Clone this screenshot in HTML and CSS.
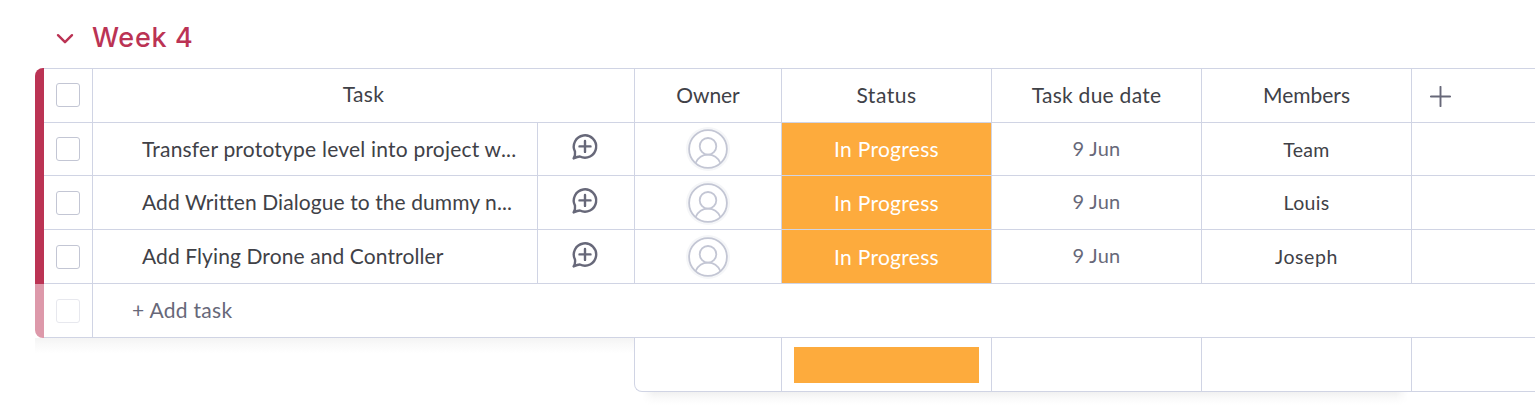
FILE: index.html
```html
<!DOCTYPE html>
<html lang="en">
<head>
<meta charset="utf-8">
<title>Week 4</title>
<link rel="stylesheet" href="styles.css">
</head>
<body>
<svg class="defs" width="0" height="0" aria-hidden="true">
  <symbol id="chat" viewBox="0 0 28 28">
    <path d="M2.6 25.4 C4 23.4 4.4 21.4 4 18.6 A11.2 11.2 0 1 1 8.9 23.5 C6.8 23.7 4.8 24.5 2.6 25.4Z"/>
    <path d="M14 7.9V18.9M8.5 13.4H19.5"/>
  </symbol>
  <symbol id="person" viewBox="0 0 44 44">
    <circle class="halo" cx="22" cy="22" r="22"/>
    <circle class="face" cx="22" cy="22" r="18.9"/>
    <circle cx="22" cy="19.3" r="8.3"/>
    <path d="M9.6 36C12 30.7 16.4 27.6 22 27.6S32 30.7 34.4 36"/>
  </symbol>
</svg>
<main class="group">
  <header class="group-head">
    <svg class="chevron" viewBox="0 0 18 12"><path d="M2 2.2L9 9.2L16 2.2"/></svg>
    <h1 class="title">Week 4</h1>
  </header>
  <section class="board">
    <div class="row head">
      <div class="bar"></div><div class="cell check"><span class="box"></span></div>
      <div class="cell wide"><span class="t-task">Task</span></div>
      <div class="cell"><span class="t-owner">Owner</span></div>
      <div class="cell"><span class="t-status">Status</span></div>
      <div class="cell"><span class="t-due">Task due date</span></div>
      <div class="cell"><span class="t-members">Members</span></div>
      <div class="cell plus"><svg class="plus-icon" viewBox="0 0 22 22"><path d="M11 .9V21.1M.9 11H21.1"/></svg></div>
    </div>
    <div class="row first">
      <div class="bar"></div><div class="cell"><span class="box"></span></div>
      <div class="cell name"><span class="n1">Transfer prototype level into project w...</span></div>
      <div class="cell"><svg class="chat"><use href="#chat"/></svg></div>
      <div class="cell owner"><svg class="person"><use href="#person"/></svg></div>
      <div class="cell status"><span>In Progress</span></div>
      <div class="cell date"><span>9 Jun</span></div>
      <div class="cell member"><span class="m1">Team</span></div>
      <div class="cell last"></div>
    </div>
    <div class="row">
      <div class="bar"></div><div class="cell"><span class="box"></span></div>
      <div class="cell name"><span class="n2">Add Written Dialogue to the dummy n...</span></div>
      <div class="cell"><svg class="chat"><use href="#chat"/></svg></div>
      <div class="cell owner"><svg class="person"><use href="#person"/></svg></div>
      <div class="cell status"><span>In Progress</span></div>
      <div class="cell date"><span>9 Jun</span></div>
      <div class="cell member"><span class="m2">Louis</span></div>
      <div class="cell last"></div>
    </div>
    <div class="row">
      <div class="bar"></div><div class="cell"><span class="box"></span></div>
      <div class="cell name"><span class="n3">Add Flying Drone and Controller</span></div>
      <div class="cell"><svg class="chat"><use href="#chat"/></svg></div>
      <div class="cell owner"><svg class="person"><use href="#person"/></svg></div>
      <div class="cell status"><span>In Progress</span></div>
      <div class="cell date"><span>9 Jun</span></div>
      <div class="cell member"><span class="m3">Joseph</span></div>
      <div class="cell last"></div>
    </div>
    <div class="row add">
      <div class="bar"></div><div class="cell"><span class="box"></span></div>
      <div class="cell add-label"><span>+ Add task</span></div>
    </div>
  </section>
  <section class="footer">
    <div class="shade"></div>
    <div class="summary">
      <div class="cell"></div>
      <div class="cell"><div class="battery"></div></div>
      <div class="cell"></div>
      <div class="cell"></div>
      <div class="cell last"></div>
    </div>
  </section>
  <div class="under"></div>
</main>
</body>
</html>
```
FILE: styles.css
```css
* { box-sizing: border-box; }
body {
  margin: 0;
  background: #fff;
  color: #404147;
  font-family: Lato, "Liberation Sans", sans-serif;
  font-size: 21px;
  line-height: 28px;
  overflow: hidden;
}
.defs { position: absolute; }
.group { height: 405px; padding-left: 35px; overflow: hidden; }
.group-head { display: flex; align-items: center; height: 68px; padding: 8px 0 0 21px; }
.chevron { width: 18px; height: 12px; margin-top: 2px; fill: none; stroke: #bb3354; stroke-width: 2.4; stroke-linecap: round; stroke-linejoin: round; }
.title {
  margin: 0 0 0 18px;
  color: #bb3354;
  font-family: Inter, "Liberation Sans", sans-serif;
  font-size: 27px;
  font-weight: 550;
  letter-spacing: .65px;
  line-height: 36px;
}
.row { display: grid; grid-template-columns: 9px 49px 445px 97px 147px 210px 210px 210px 1fr; height: 54px; white-space: nowrap; }
.first { height: 53px; }
.head { height: 55px; grid-template-columns: 9px 49px 542px 147px 210px 210px 210px 1fr; }
.head .cell { padding-bottom: 1px; border-top: 1px solid #d0d4e4; }
.bar { background: #bb3354; }
.head .bar { border-top-left-radius: 8px; }
.cell {
  display: flex;
  align-items: center;
  justify-content: center;
  min-width: 0;
  border-right: 1px solid #d0d4e4;
  border-bottom: 1px solid #d0d4e4;
}
.box { width: 24px; height: 24px; border: 1px solid #c3c6d4; border-radius: 3px; }
.head .check { padding-bottom: 2px; }
.head .wide { padding-bottom: 3px; }
.t-task { letter-spacing: .3px; }
.t-owner { letter-spacing: -.1px; }
.t-status { letter-spacing: .5px; }
.t-due { letter-spacing: .27px; }
.head .plus { justify-content: flex-start; padding: 1px 0 0 18px; border-right: 0; }
.plus-icon { width: 21px; height: 21px; fill: none; stroke: #676879; stroke-width: 2; stroke-linecap: round; }
.name { justify-content: flex-start; padding: 0 0 1px 49px; }
.n1 { letter-spacing: .21px; }
.n2 { letter-spacing: .08px; }
.n3 { letter-spacing: .1px; }
.chat { width: 28px; height: 28px; margin: -4px 2px 0 0; fill: none; stroke: #676879; stroke-width: 2.4; stroke-linecap: round; stroke-linejoin: round; }
.owner { padding-right: 1px; }
.person { width: 44px; height: 44px; fill: none; stroke: #c3c6d4; stroke-width: 1.8; }
.halo { fill: #f5f6f8; stroke: none; }
.face { fill: #fff; }
.status { background: #fdab3d; background-clip: padding-box; color: #fff; letter-spacing: .3px; }
.date { padding-bottom: 3px; color: #676879; font-size: 20px; letter-spacing: .3px; }
.member { padding-top: 1px; font-size: 19.5px; }
.m1 { letter-spacing: .3px; }
.m2 { letter-spacing: .3px; }
.m3 { letter-spacing: .6px; }
.last { border-right: 0; }
.add { grid-template-columns: 9px 49px 1fr; }
.add .bar { background: #dd99aa; border-bottom-left-radius: 8px; }
.add .box { border-color: #e7e8ee; }
.add-label { justify-content: flex-start; padding: 0 0 1px 39px; color: #676879; border-right: 0; letter-spacing: .3px; }
.footer { display: grid; grid-template-columns: 599px 1fr; height: 54px; }
.shade { height: 16px; background: linear-gradient(#f4f4f4, #fafafa 45%, #fff); }
.summary {
  display: grid;
  grid-template-columns: 147px 210px 210px 210px 1fr;
  border-left: 1px solid #d0d4e4;
  border-bottom: 1px solid #d0d4e4;
  border-bottom-left-radius: 8px;
}
.summary .cell { border-bottom: 0; }
.battery { width: 185px; height: 36px; background: #fdab3d; }
.under { width: 766px; height: 13px; margin-left: 607px; background: linear-gradient(#f1f1f1, #fafafa 50%, #fff); mask-image: linear-gradient(90deg, transparent, #000 12px, #000 calc(100% - 12px), transparent); }
```
